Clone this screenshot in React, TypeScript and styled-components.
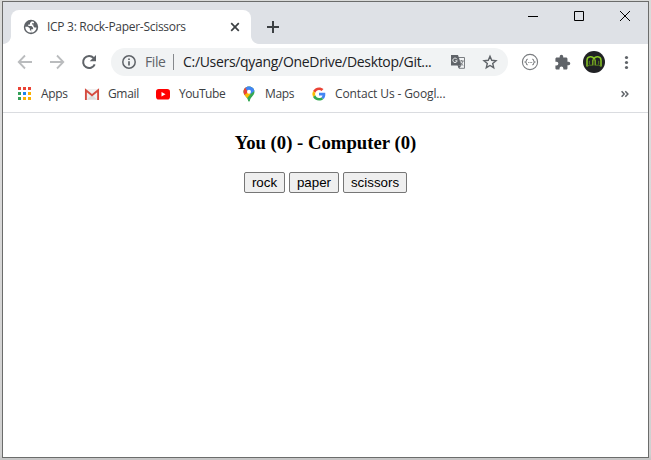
import React from "react";
import styled, { createGlobalStyle } from "styled-components";

const GlobalStyle = createGlobalStyle`
  * { box-sizing: border-box; }
  html, body { margin: 0; padding: 0; height: 100%; overflow: hidden; background: #d6d6d6; }
  svg { display: block; flex: none; }
`;

const Desktop = styled.div`
  width: 651px;
  height: 460px;
  padding: 1px 2px 2px 2px;
  background: linear-gradient(to bottom, #d9dad9 0, #dcdcdc 120px, #d0d0d0 454px, #c4c4c4 460px);
`;

const Window = styled.div`
  width: 647px;
  height: 457px;
  border: 1px solid #6b6c6b;
  background: #fff;
  display: flex;
  flex-direction: column;
  font-family: "Open Sans", "Noto Sans", sans-serif;
`;

const TabStrip = styled.div`
  height: 42px;
  flex: none;
  background: #dee1e6;
  display: flex;
  align-items: flex-end;
`;

const TabFoot = styled.div<{ $side: "left" | "right" }>`
  width: 8px;
  height: 8px;
  flex: none;
  background: radial-gradient(
    circle at ${(p) => (p.$side === "left" ? "0 0" : "8px 0")},
    #dee1e6 7.5px,
    #fff 8.3px
  );
`;

const Tab = styled.div`
  width: 240px;
  height: 34px;
  background: #fff;
  border-radius: 8px 8px 0 0;
  display: flex;
  align-items: center;
  padding: 0 9px 0 12px;
`;

const Label = styled.span<{ $width: number; $size?: number; $spacing?: number; $color?: string }>`
  width: ${(p) => p.$width}px;
  flex: none;
  font-size: ${(p) => p.$size ?? 12}px;
  letter-spacing: ${(p) => p.$spacing ?? 0}px;
  color: ${(p) => p.$color ?? "#3c4043"};
  line-height: 20px;
  white-space: nowrap;
`;

const TabTitle = styled(Label)`
  margin-left: 8px;
`;

const TabClose = styled.span`
  margin-left: auto;
`;

const NewTab = styled.div`
  width: 28px;
  height: 34px;
  display: flex;
  align-items: center;
  justify-content: center;
`;

const Controls = styled.div`
  margin-left: auto;
  align-self: flex-start;
  display: flex;
`;

const ControlButton = styled.div`
  width: 46px;
  height: 28px;
  display: flex;
  align-items: center;
  justify-content: center;
`;

const Toolbar = styled.div`
  height: 36px;
  flex: none;
  display: flex;
  align-items: center;
  padding: 0 6px;
`;

const ToolSlot = styled.div`
  width: 32px;
  height: 28px;
  flex: none;
  display: flex;
  align-items: center;
  justify-content: center;
`;

const AddressBar = styled.div`
  width: 397px;
  height: 28px;
  margin: 0 6px;
  border-radius: 14px;
  background: #f1f3f4;
  display: flex;
  align-items: center;
  padding: 0 2px 0 10px;
`;

const SchemeLabel = styled(Label)`
  margin-left: 8px;
`;

const Separator = styled.span`
  width: 1px;
  height: 16px;
  margin: 0 9px 0 7px;
  background: #85888c;
`;

const AddressActions = styled.div`
  margin-left: auto;
  display: flex;
`;

const Bookmarks = styled.div`
  height: 33px;
  flex: none;
  border-bottom: 1px solid #dadce0;
  display: flex;
  align-items: center;
  padding: 0 19px 4px 14px;
`;

const Bookmark = styled.div`
  display: flex;
  align-items: center;
  gap: 8px;
  margin-right: 16px;
`;

const Overflow = styled.div`
  margin-left: auto;
`;

const Page = styled.main`
  flex: 1;
  padding-top: 19px;
  text-align: center;
`;

const Score = styled.h3`
  margin: 0;
  font: bold 18.72px/22px "Liberation Serif", serif;
  color: #000;
`;

const Choices = styled.div`
  margin-top: 18px;
  display: flex;
  justify-content: center;
  gap: 4px;
`;

const ChoiceButton = styled.button<{ $width: number }>`
  width: ${(p) => p.$width}px;
  height: 21px;
  padding: 0;
  border: 1px solid #767676;
  border-radius: 2px;
  background: #efefef;
  color: #000;
  font: 13.333px/17px "Liberation Sans", sans-serif;
`;

const GlobeIcon = () => (
  <svg width="16" height="16" viewBox="0 0 16 16">
    <circle cx="8" cy="8" r="7.2" fill="#5f6368" />
    <path d="M8.800 2.300 7 4v1.500H5.300V7h3.200l1.600 1.800v1.400H8.200v3.400c3-.1 5.100-2.400 5.300-5.200h-2.100L10.300 7V5.600H9V4.200h2V3.100C10.300 2.600 9.400 2.400 8.800 2.300z" fill="#fff" />
    <path d="M2.300 7.700h2.600l2 1.800v1.600l1.200 1v1.500C4.800 13.600 2.300 11.200 2.300 7.700z" fill="#fff" />
  </svg>
);

const CrossIcon = () => (
  <svg width="14" height="14" viewBox="0 0 14 14" stroke="#3c4043" strokeWidth="1.7">
    <path d="M3.200 3.200l7.600 7.600M10.800 3.200l-7.600 7.600" />
  </svg>
);

const PlusIcon = () => (
  <svg width="14" height="14" viewBox="0 0 14 14" stroke="#3c4043" strokeWidth="2">
    <path d="M7 1v12M1 7h12" />
  </svg>
);

const WinIcon = ({ d }: { d: string }) => (
  <svg width="12" height="12" viewBox="0 0 12 12" fill="none" stroke="#000" strokeWidth="1">
    <path d={d} />
  </svg>
);

const ArrowIcon = ({ flip }: { flip?: boolean }) => (
  <svg width="16" height="16" viewBox="0 0 16 16" fill="none" stroke="#babcbe" strokeWidth="1.8">
    <path d={flip ? "M1 8h13M8 1.500l6.300 6.500L8 14.500" : "M15 8H2M8 1.500L1.700 8 8 14.500"} />
  </svg>
);

const ReloadIcon = () => (
  <svg width="16" height="16" viewBox="0 0 16 16">
    <path d="M13.700 10.300A6 6 0 1 1 12.600 4" fill="none" stroke="#5f6368" strokeWidth="2" />
    <path d="M15 1v6.300H8.700z" fill="#5f6368" />
  </svg>
);

const InfoIcon = () => (
  <svg width="16" height="16" viewBox="0 0 16 16" fill="none" stroke="#5f6368">
    <circle cx="8" cy="8" r="6.200" strokeWidth="1.5" />
    <path d="M8 7.200v4.300M8 4.500v1.600" strokeWidth="1.7" />
  </svg>
);

const TranslateIcon = () => (
  <svg width="16" height="16" viewBox="0 0 16 16">
    <path d="M6 3.500h8.500v10.800H9z" fill="#f1f3f4" stroke="#7b7e82" />
    <path d="M1 1h7l3.500 10.500H1z" fill="#5f6368" />
    <path d="M7 5.300A2.200 2.200 0 1 0 7.200 6.800H5.300" fill="none" stroke="#f1f3f4" strokeWidth="1" />
    <path d="M9.500 7h4.300M11.600 6v1M12.900 7c-.5 2-1.400 3.300-2.400 4.200M10.500 8.300c.7 1.500 1.600 2.400 2.800 3.200" fill="none" stroke="#7b7e82" />
    <path d="M7.500 11.500h4L9 14.300z" fill="#5f6368" />
  </svg>
);

const StarIcon = () => (
  <svg width="16" height="16" viewBox="0 0 16 16" fill="none" stroke="#5f6368" strokeWidth="1.4">
    <path d="M8 2.300l1.700 4 4.300.4-3.300 2.800 1 4.200L8 11.500l-3.700 2.200 1-4.200L2 6.700l4.300-.4z" />
  </svg>
);

const BracesIcon = () => (
  <svg width="18" height="18" viewBox="0 0 18 18" fill="none" stroke="#7a7d80">
    <circle cx="9" cy="9" r="7.600" strokeWidth="1.1" />
    <path d="M6.800 6.200H6.200c-1.200 0-.2 2.300-1.900 2.800 1.700.5.700 2.800 1.900 2.800h.6M11.200 6.200h.6c1.200 0 .2 2.300 1.900 2.800-1.700.5-.7 2.800-1.900 2.800h-.6" strokeWidth="1.1" />
    <path d="M7.200 9.500h1M8.700 9.500h1M10.200 9.500h1" strokeWidth=".9" />
  </svg>
);

const PuzzleIcon = () => (
  <svg width="17" height="17" viewBox="0 0 24 24" fill="#5f6368">
    <path d="M20.500 11H19V7c0-1.100-.9-2-2-2h-4V3.500a2.500 2.500 0 0 0-5 0V5H4c-1.100 0-2 .9-2 2v3.800h1.500a2.700 2.700 0 0 1 0 5.400H2V20c0 1.100.9 2 2 2h3.800v-1.500a2.700 2.700 0 0 1 5.400 0V22H17c1.100 0 2-.9 2-2v-4h1.500a2.500 2.500 0 0 0 0-5z" />
  </svg>
);

const AvatarIcon = () => (
  <svg width="22" height="22" viewBox="0 0 22 22" fill="none">
    <circle cx="11" cy="11" r="11" fill="#202124" />
    <path d="M4 15.500V9.200C4 4.800 10 4.800 11 8c1-3.200 7-3.200 7 1.200v6.300" stroke="#8ac926" strokeWidth="1.5" />
    <path d="M6.300 13.500V9.800M15.700 13.500V9.800M4 15.500l2.300-1.300H9M18 15.500l-2.300-1.300H13" stroke="#55801c" />
    <path d="M9.800 14.500V8.500M12.200 14.500V8.500" stroke="#84bd20" strokeWidth="1.2" />
  </svg>
);

const DotsIcon = () => (
  <svg width="16" height="16" viewBox="0 0 16 16" fill="#5f6368">
    <circle cx="8.500" cy="3.500" r="1.600" />
    <circle cx="8.500" cy="8.500" r="1.600" />
    <circle cx="8.500" cy="13.500" r="1.600" />
  </svg>
);

const appColors = ["#ea4335", "#ea4335", "#ea4335", "#34a058", "#1a84ee", "#fbb000", "#34a058", "#fbb000", "#fbb000"];

const AppsIcon = () => (
  <svg width="16" height="16" viewBox="0 0 16 16">
    {appColors.map((color, i) => (
      <rect key={i} x={1 + (i % 3) * 5} y={1 + Math.floor(i / 3) * 5} width="3" height="3" fill={color} />
    ))}
  </svg>
);

const GmailIcon = () => (
  <svg width="16" height="16" viewBox="0 0 16 16">
    <path d="M1 3h14v11H1z" fill="#efefef" />
    <path d="M3 13.500L8 9l5 4.500z" fill="#dcdcdc" />
    <path d="M1.900 14V4.300L8 9.200l6.100-4.900V14" fill="none" stroke="#d54b3f" strokeWidth="1.9" />
  </svg>
);

const YouTubeIcon = () => (
  <svg width="16" height="16" viewBox="0 0 16 16">
    <rect x="1" y="3" width="14" height="10.500" rx="2.800" fill="#f00" />
    <path d="M6.500 6v4.600l4-2.300z" fill="#fff" />
  </svg>
);

const MapsIcon = () => (
  <svg width="16" height="16" viewBox="0 0 16 16">
    <defs>
      <clipPath id="pin">
        <path d="M8 .500c3.200 0 5.500 2.400 5.500 5.300 0 3.700-4 5-4.700 9.200q-.8 1.200-1.600 0C6.500 10.800 2.500 9.500 2.500 5.800 2.500 2.900 4.800.500 8 .500z" />
      </clipPath>
    </defs>
    <g clipPath="url(#pin)">
      <path d="M0 0h16v16H0z" fill="#34a853" />
      <path d="M2 8.500l4-4 4 3-5 6z" fill="#fbbc04" />
      <path d="M0 0h6l2 5.500L3.500 9 0 8z" fill="#ea4335" />
      <path d="M5.500 0H16v3L9.500 8 6 4.500 4.500 2z" fill="#4285f4" />
    </g>
    <circle cx="8" cy="5.700" r="2" fill="#fff" />
  </svg>
);

const GoogleIcon = () => (
  <svg width="16" height="16" viewBox="-2 -2 52 52">
    <path fill="#ea4335" d="M24 11c3.300 0 6.100 1.100 8.400 3.300l6.200-6.200C34.800 4.500 29.900 2.500 24 2.500 15.500 2.500 8.200 7.400 4.700 14.500l7.300 5.600C13.800 14.800 18.500 11 24 11z" />
    <path fill="#4285f4" d="M44.500 24.500c0-1.500-.1-2.900-.4-4.200H24v8.500h11.500c-.5 2.600-2 4.800-4.200 6.300l7.100 5.500c4.100-3.800 6.100-9.400 6.100-16.100z" />
    <path fill="#fbbc05" d="M12 28.100a13 13 0 0 1 0-8l-7.300-5.600a21.500 21.500 0 0 0 0 19.200z" />
    <path fill="#34a853" d="M24 45.500c5.800 0 10.700-1.900 14.300-5.100l-7-5.400c-2 1.300-4.400 2.100-7.300 2.100-5.600 0-10.300-3.800-12-9l-7.300 5.600C8.200 40.700 15.500 45.500 24 45.500z" />
  </svg>
);

const bookmarks = [
  { name: "Apps", width: 27, spacing: -0.35, icon: <AppsIcon /> },
  { name: "Gmail", width: 31, spacing: -0.35, icon: <GmailIcon /> },
  { name: "YouTube", width: 46, spacing: -0.45, icon: <YouTubeIcon /> },
  { name: "Maps", width: 30, spacing: -0.35, icon: <MapsIcon /> },
  { name: "Contact Us - Googl...", width: 112, spacing: -0.12, icon: <GoogleIcon /> },
];

const choices = [
  { name: "rock", width: 41 },
  { name: "paper", width: 50 },
  { name: "scissors", width: 64 },
];

export default function App() {
  return (
    <>
      <GlobalStyle />
      <Desktop>
        <Window>
          <TabStrip>
            <TabFoot $side="left" />
            <Tab>
              <GlobeIcon />
              <TabTitle $width={140} $spacing={-0.29}>ICP 3: Rock-Paper-Scissors</TabTitle>
              <TabClose><CrossIcon /></TabClose>
            </Tab>
            <TabFoot $side="right" />
            <NewTab><PlusIcon /></NewTab>
            <Controls>
              <ControlButton><WinIcon d="M1 6.500h10" /></ControlButton>
              <ControlButton><WinIcon d="M1.500 1.500h9v9h-9z" /></ControlButton>
              <ControlButton><WinIcon d="M1 1l10 10M11 1L1 11" /></ControlButton>
            </Controls>
          </TabStrip>
          <Toolbar>
            <ToolSlot><ArrowIcon /></ToolSlot>
            <ToolSlot><ArrowIcon flip /></ToolSlot>
            <ToolSlot><ReloadIcon /></ToolSlot>
            <AddressBar>
              <InfoIcon />
              <SchemeLabel $width={21} $size={14} $spacing={-0.4} $color="#5f6368">File</SchemeLabel>
              <Separator />
              <Label $width={249} $size={14} $spacing={-0.31} $color="#202124">C:/Users/qyang/OneDrive/Desktop/Git...</Label>
              <AddressActions>
                <ToolSlot><TranslateIcon /></ToolSlot>
                <ToolSlot><StarIcon /></ToolSlot>
              </AddressActions>
            </AddressBar>
            <ToolSlot><BracesIcon /></ToolSlot>
            <ToolSlot><PuzzleIcon /></ToolSlot>
            <ToolSlot><AvatarIcon /></ToolSlot>
            <ToolSlot><DotsIcon /></ToolSlot>
          </Toolbar>
          <Bookmarks>
            {bookmarks.map((b) => (
              <Bookmark key={b.name}>
                {b.icon}
                <Label $width={b.width} $spacing={b.spacing}>{b.name}</Label>
              </Bookmark>
            ))}
            <Overflow>
              <svg width="8" height="8" viewBox="0 0 8 8" fill="none" stroke="#5f6368" strokeWidth="1.5">
                <path d="M.600 1.200L3.200 4 .600 6.800M4.300 1.200L6.900 4 4.300 6.800" />
              </svg>
            </Overflow>
          </Bookmarks>
          <Page>
            <Score>You (0) - Computer (0)</Score>
            <Choices>
              {choices.map((c) => (
                <ChoiceButton key={c.name} $width={c.width}>{c.name}</ChoiceButton>
              ))}
            </Choices>
          </Page>
        </Window>
      </Desktop>
    </>
  );
}
